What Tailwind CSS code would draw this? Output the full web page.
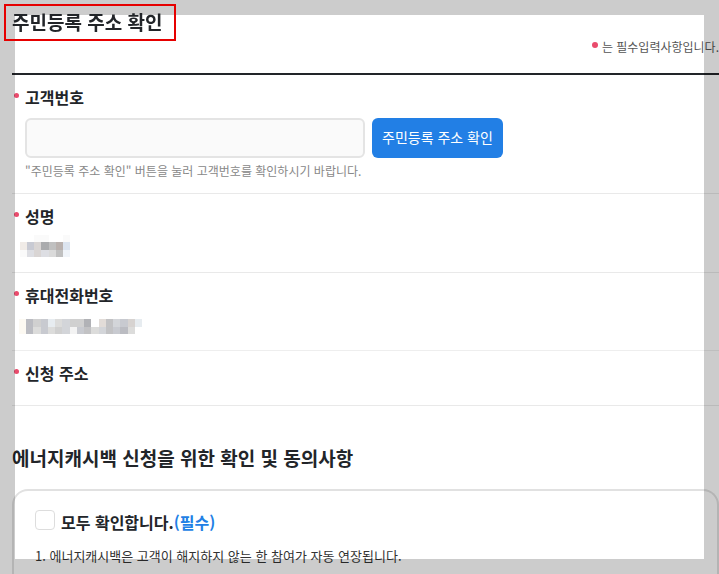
<!DOCTYPE html>
<html lang="ko">
<head>
  <meta charset="UTF-8" />
  <meta name="viewport" content="width=device-width, initial-scale=1" />
  <title>주민등록 주소 확인</title>
  <script src="https://cdn.jsdelivr.net/npm/@tailwindcss/browser@4"></script>
</head>
<body class="bg-white text-[#222529] font-['Noto_Sans_CJK_KR',sans-serif]">

  <main class="flex h-screen flex-col overflow-hidden pl-3">
    <header class="border-b-2 border-[#222529] pt-1 pb-5">
      <h1 class="relative z-20 -ml-2 w-fit border-2 border-[#e60000] px-[6px] pr-3 pb-[2px] text-[19px] leading-[31px] font-bold">주민등록 주소 확인</h1>
      <p class="flex h-3 items-center justify-end gap-1 text-xs leading-3 whitespace-nowrap text-[#555]">
        <span class="mb-1 size-[6px] rounded-full bg-[#e94b6c]"></span>는 필수입력사항입니다.
      </p>
    </header>

    <form class="flex grow flex-col">
      <section class="border-b border-[#e9e9e9] pt-[10px] pb-3 pl-[13px]">
        <label for="customerNo" class="-ml-[11px] flex items-center gap-[6px] text-base leading-6 font-bold">
          <span class="mb-1 size-[5px] rounded-full bg-[#e94b6c]"></span>고객번호
        </label>
        <div class="mt-[9px] flex gap-[7px]">
          <input type="text" id="customerNo" name="customerNo" readonly class="h-10 w-[340px] rounded-md border-2 border-[#e4e4e4] bg-[#fafafa] px-3 text-sm" />
          <button type="button" class="h-10 rounded-md bg-[#227fe5] px-[10px] pb-[2px] text-sm text-white">주민등록 주소 확인</button>
        </div>
        <p class="mt-[3px] text-xs leading-5 text-[#888]">"주민등록 주소 확인" 버튼을 눌러 고객번호를 확인하시기 바랍니다.</p>
      </section>

      <section class="border-b border-[#e9e9e9] pt-[10px] pb-[15px] pl-[13px]">
        <h3 class="-ml-[11px] flex items-center gap-[6px] text-base leading-6 font-bold">
          <span class="mb-1 size-[5px] rounded-full bg-[#e94b6c]"></span>성명
        </h3>
        <!-- masked name -->
        <svg class="mt-[7px] -ml-[5px] h-[22px] w-[50px]" viewBox="0 0 7 3" preserveAspectRatio="none" shape-rendering="crispEdges">
          <path fill="#fafafa" d="M2 0h2v1H2zM6 0h1v1H6zM0 2h1v1H0z" />
          <path fill="#f0ebe7" d="M0 1h1v1H0z" />
          <path fill="#c8cad3" d="M1 1h1v1H1z" />
          <path fill="#d9d5d4" d="M2 1h1v2H2z" />
          <path fill="#aaabad" d="M3 1h1v1H3z" />
          <path fill="#c0c0c0" d="M4 1h1v1H4zM5 2h1v1H5z" />
          <path fill="#b9b1ae" d="M5 1h1v1H5z" />
          <path fill="#dce4ef" d="M6 1h1v1H6z" />
          <path fill="#dddee3" d="M1 2h1v1H1zM3 2h1v1H3z" />
          <path fill="#dadada" d="M4 2h1v1H4z" />
          <path fill="#f0f4f9" d="M6 2h1v1H6z" />
        </svg>
      </section>

      <section class="border-b border-[#eeeeee] pt-[10px] pb-4 pl-[13px]">
        <h3 class="-ml-[11px] flex items-center gap-[6px] text-base leading-6 font-bold">
          <span class="mb-1 size-[5px] rounded-full bg-[#e94b6c]"></span>휴대전화번호
        </h3>
        <!-- masked phone number -->
        <svg class="mt-3 -ml-[6px] h-[15px] w-[123px]" viewBox="0 0 17 2" preserveAspectRatio="none" shape-rendering="crispEdges">
          <path fill="#fcf9f2" d="M0 0h1v2H0z" />
          <path fill="#bbbcc2" d="M1 0h1v2H1zM14 1h1v1H14z" />
          <path fill="#d0d0d0" d="M2 0h1v1H2zM7 0h1v1H7zM8 0h1v1H8zM5 1h1v1H5z" />
          <path fill="#dcdcdb" d="M2 1h1v1H2zM5 0h1v1H5zM4 1h1v1H4zM10 1h1v1H10zM15 1h1v1H15z" />
          <path fill="#c8cad0" d="M3 0h1v2H3zM8 1h1v1H8zM14 0h1v1H14zM13 1h1v1H13z" />
          <path fill="#e7ecf0" d="M4 0h1v1H4zM16 0h1v1H16z" />
          <path fill="#d3d5d9" d="M6 0h1v2H6zM13 0h1v1H13zM11 1h1v1H11z" />
          <path fill="#f3f3f3" d="M7 1h1v1H7z" />
          <path fill="#b1b2b6" d="M9 0h1v1H9z" />
          <path fill="#c2c2c4" d="M9 1h1v1H9zM12 0h1v2H12z" />
          <path fill="#e2dcd8" d="M11 0h1v1H11z" />
          <path fill="#d7d3d1" d="M15 0h1v1H15z" />
        </svg>
      </section>

      <section class="border-b border-[#e9e9e9] pt-[10px] pb-5 pl-[13px]">
        <h3 class="-ml-[11px] flex items-center gap-[6px] text-base leading-6 font-bold">
          <span class="mb-1 size-[5px] rounded-full bg-[#e94b6c]"></span>신청 주소
        </h3>
      </section>

      <h2 class="mt-[38px] text-[19px] leading-7 font-bold">에너지캐시백 신청을 위한 확인 및 동의사항</h2>

      <section class="mt-[17px] grow rounded-t-2xl border-2 border-b-0 border-[#e1e1e1] px-[21px] pt-[19px]">
        <div class="flex items-center gap-[6px] text-base leading-6 font-bold">
          <input type="checkbox" id="agreeAll" name="agreeAll" class="mb-1 size-5 appearance-none rounded-sm border border-[#dddddd] bg-white checked:bg-[#227fe5]" />
          <label for="agreeAll">모두 확인합니다.<span class="text-[#227fe5]">(필수)</span></label>
        </div>
        <p class="mt-3 text-[13px] leading-5 whitespace-nowrap text-[#333]">1. 에너지캐시백은 고객이 해지하지 않는 한 참여가 자동 연장됩니다.</p>
      </section>
    </form>
  </main>

  <!-- dimmed frame around the page -->
  <div class="pointer-events-none fixed inset-0 z-10 border-[15px] border-black/20"></div>

</body>
</html>
